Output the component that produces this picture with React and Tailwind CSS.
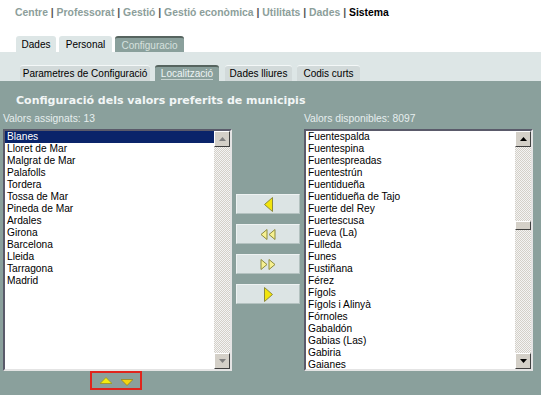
import React from 'react'

const assigned = ['Blanes', 'Lloret de Mar', 'Malgrat de Mar', 'Palafolls', 'Tordera', 'Tossa de Mar', 'Pineda de Mar', 'Ardales', 'Girona', 'Barcelona', 'Lleida', 'Tarragona', 'Madrid']

const available = ['Fuentespalda', 'Fuentespina', 'Fuentespreadas', 'Fuentestrún', 'Fuentidueña', 'Fuentidueña de Tajo', 'Fuerte del Rey', 'Fuertescusa', 'Fueva (La)', 'Fulleda', 'Funes', 'Fustiñana', 'Férez', 'Fígols', 'Fígols i Alinyà', 'Fórnoles', 'Gabaldón', 'Gabias (Las)', 'Gabiria', 'Gaianes']

const menu = ['Centre', 'Professorat', 'Gestió', 'Gestió econòmica', 'Utilitats', 'Dades']

function Arrow({ up, disabled }) {
  return (
    <div className="w-[16px] h-[16px] bg-[#d4d0c8] border border-t-white border-l-white border-r-[#404040] border-b-[#404040] flex items-center justify-center">
      <svg width="7" height="4" viewBox="0 0 7 4">
        <path d={up ? 'M0 4 L3.5 0 L7 4 Z' : 'M0 0 L3.5 4 L7 0 Z'} fill={disabled ? '#808080' : '#000'} />
      </svg>
    </div>
  )
}

function ListBox({ items, selected, thumb }) {
  return (
    <div className="w-[229px] h-[242px] flex bg-white border-2 border-t-[#5a5a6a] border-l-[#5a5a6a] border-r-[#e4e4e4] border-b-[#e4e4e4]">
      <div className="flex-1 flex flex-col overflow-hidden">
        {items.map((it, i) => (
          <div
            key={it}
            className={`h-[12px] shrink-0 leading-[12px] pl-[2px] text-[10.2px] whitespace-nowrap ${i === selected ? 'bg-[#0a246a] text-white' : 'text-black'}`}
          >
            {it}
          </div>
        ))}
      </div>
      <div className="w-[16px] flex flex-col bg-[repeating-conic-gradient(#f4f4f4_0_25%,#d4d0c8_0_50%)] bg-[length:2px_2px]">
        <Arrow up disabled={!thumb} />
        <div className="flex-1 relative">
          {thumb && (
            <div className="absolute left-0 top-[74px] w-[16px] h-[9px] bg-[#d4d0c8] border border-t-white border-l-white border-r-[#404040] border-b-[#404040]" />
          )}
        </div>
        <Arrow disabled={!thumb} />
      </div>
    </div>
  )
}

function MoveButton({ children }) {
  return (
    <div className="w-[64px] h-[20px] bg-[#dce4e4] border border-t-[#eef2f2] border-l-[#eef2f2] border-r-[#b4c2c0] border-b-[#b4c2c0] flex items-center justify-center">
      {children}
    </div>
  )
}

export default function App() {
  return (
    <div className="w-[541px] h-[395px] overflow-hidden bg-[#8aa09c] flex flex-col" style={{ fontFamily: '"Liberation Sans", Arial, sans-serif' }}>
      <div className="bg-white pl-[15px] pt-[6px] h-[52px] flex flex-col">
        <div className="h-[14px] leading-[14px] text-[10.4px] font-bold text-[#8c9e9a] whitespace-nowrap">
          {menu.map((m) => (
            <span key={m}>
              {m}
              <span className="text-[#555]"> | </span>
            </span>
          ))}
          <span className="text-black">Sistema</span>
        </div>
        <div className="flex mt-[16px] gap-[3px] pl-[1px] text-[10px] whitespace-nowrap">
          <div className="w-[40px] h-[16px] leading-[17px] text-center bg-[#dde6e6] rounded-t-[3px] text-black">Dades</div>
          <div className="w-[53px] h-[16px] leading-[17px] text-center bg-[#dde6e6] rounded-t-[3px] text-black">Personal</div>
          <div className="w-[69px] h-[16px] leading-[15px] text-center bg-[#8aa09c] rounded-t-[3px] border-t-2 border-[#56645f] text-[#d6e0de]">Configuracio</div>
        </div>
      </div>

      <div className="bg-[#dde6e6] h-[29px] flex items-end pl-[20px] gap-[5px] text-[10px] whitespace-nowrap">
        <div className="w-[130px] h-[16px] leading-[16px] text-center bg-[#d2dada] border-t border-[#f4f8f8] rounded-t-[3px] text-black">Parametres de Configuració</div>
        <div className="w-[64px] h-[16px] leading-[14px] text-center bg-[#8aa09c] border-t-2 border-[#56645f] rounded-t-[3px] text-[#eef4f4]">
          <span className="border-b border-[#c8d4d2]">Localització</span>
        </div>
        <div className="w-[67px] h-[16px] leading-[16px] text-center bg-[#d2dada] border-t border-[#f4f8f8] rounded-t-[3px] text-black ml-[1px]">Dades lliures</div>
        <div className="w-[63px] h-[16px] leading-[16px] text-center bg-[#d2dada] border-t border-[#f4f8f8] rounded-t-[3px] text-black">Codis curts</div>
      </div>

      <div className="flex-1 flex flex-col pt-[11px]">
        <div className="pl-[16px] h-[18px] leading-[18px] text-[11px] font-bold text-[#f2f6f6] whitespace-nowrap" style={{ fontFamily: '"DejaVu Sans", Verdana, sans-serif' }}>
          Configuració dels valors preferits de municipis
        </div>
        <div className="flex pl-[3px] mt-[3px]">
          <div className="flex flex-col items-center">
            <div className="self-start h-[12px] leading-[12px] text-[10.3px] text-[#e6eeee] mb-[4px]">Valors assignats: 13</div>
            <ListBox items={assigned} selected={0} />
            <div className="-ml-[3px] w-[52px] h-[19px] border-2 border-[#e0241c] flex items-center justify-center gap-[9px]">
              <svg width="12" height="7" viewBox="0 0 12 7">
                <path d="M0 6.5 L6 0.5 L12 6.5 Z" fill="#f4ec10" stroke="#9a9420" strokeWidth="0.8" />
              </svg>
              <svg width="12" height="7" viewBox="0 0 12 7" className="mt-[4px]">
                <path d="M0 0.5 L6 6.5 L12 0.5 Z" fill="#f4d410" stroke="#9a8420" strokeWidth="0.8" />
              </svg>
            </div>
          </div>
          <div className="w-[72px] flex flex-col items-center pt-[81px] gap-[10px]">
            <MoveButton>
              <svg width="9" height="15" viewBox="0 0 9 15">
                <path d="M8.5 0.5 L0.5 7.5 L8.5 14.5 Z" fill="#f2e40c" stroke="#8c8a3c" strokeWidth="1" />
              </svg>
            </MoveButton>
            <MoveButton>
              <svg width="16" height="11" viewBox="0 0 16 11">
                <path d="M7 0.5 L1 5.5 L7 10.5 Z" fill="#f6f090" stroke="#8c8a3c" strokeWidth="1" />
                <path d="M15 0.5 L9 5.5 L15 10.5 Z" fill="#f6f090" stroke="#8c8a3c" strokeWidth="1" />
              </svg>
            </MoveButton>
            <MoveButton>
              <svg width="16" height="11" viewBox="0 0 16 11">
                <path d="M1 0.5 L7 5.5 L1 10.5 Z" fill="#f6f090" stroke="#8c8a3c" strokeWidth="1" />
                <path d="M9 0.5 L15 5.5 L9 10.5 Z" fill="#f6f090" stroke="#8c8a3c" strokeWidth="1" />
              </svg>
            </MoveButton>
            <MoveButton>
              <svg width="9" height="15" viewBox="0 0 9 15">
                <path d="M0.5 0.5 L8.5 7.5 L0.5 14.5 Z" fill="#f2e40c" stroke="#8c8a3c" strokeWidth="1" />
              </svg>
            </MoveButton>
          </div>
          <div className="flex flex-col">
            <div className="h-[12px] leading-[12px] text-[10.3px] text-[#e6eeee] mb-[4px]">Valors disponibles: 8097</div>
            <ListBox items={available} thumb />
          </div>
        </div>
      </div>
    </div>
  )
}
